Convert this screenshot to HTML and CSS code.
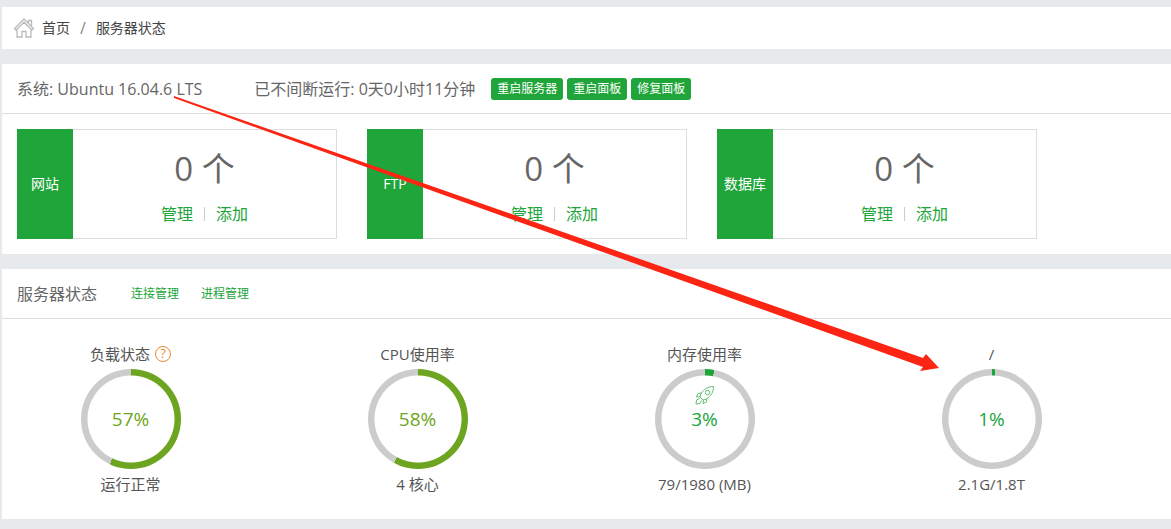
FILE: index.html
```html
<!DOCTYPE html>
<html lang="zh-CN">
<head>
  <meta charset="UTF-8">
  <meta name="viewport" content="width=device-width, initial-scale=1.0">
  <title>服务器状态</title>
  <link rel="stylesheet" href="styles.css">
</head>
<body>
  <!-- 面包屑 -->
  <nav class="crumb">
    <svg class="home" viewBox="0 0 22 22" width="22" height="22">
      <path d="M1.500 11.500 L11 2 L20.500 11.500 L19 13 L11 5.200 L3 13 Z M4 12.500 V20 H9 V14.500 H13 V20 H18 V12.500 M15.500 6 V3.500 H18.500 V9"/>
    </svg>
    <a href="#">首页</a>
    <span class="sep">/</span>
    <span>服务器状态</span>
  </nav>

  <!-- 系统信息 -->
  <section class="panel">
    <header class="panel-head">
      <span class="system">系统: Ubuntu 16.04.6 LTS</span>
      <span class="uptime">已不间断运行: 0天0小时11分钟</span>
      <div class="buttons">
        <button class="btn" type="button">重启服务器</button>
        <button class="btn" type="button">重启面板</button>
        <button class="btn" type="button">修复面板</button>
      </div>
    </header>
    <div class="cards">
      <div class="card">
        <div class="card-name">网站</div>
        <div class="card-body">
          <div class="count">0 个</div>
          <div class="links"><a href="#">管理</a><span class="bar"></span><a href="#">添加</a></div>
        </div>
      </div>
      <div class="card">
        <div class="card-name">FTP</div>
        <div class="card-body">
          <div class="count">0 个</div>
          <div class="links"><a href="#">管理</a><span class="bar"></span><a href="#">添加</a></div>
        </div>
      </div>
      <div class="card">
        <div class="card-name">数据库</div>
        <div class="card-body">
          <div class="count">0 个</div>
          <div class="links"><a href="#">管理</a><span class="bar"></span><a href="#">添加</a></div>
        </div>
      </div>
    </div>
  </section>

  <!-- 服务器状态 -->
  <section class="panel">
    <header class="panel-head">
      <h3 class="title">服务器状态</h3>
      <a class="small-link" href="#">连接管理</a>
      <a class="small-link" href="#">进程管理</a>
    </header>
    <div class="gauges">
      <div class="gauge">
        <div class="gauge-name">负载状态 <a class="help" href="#">?</a></div>
        <div class="ring load" style="--value: 57%">57%</div>
        <div class="gauge-info">运行正常</div>
      </div>
      <div class="gauge">
        <div class="gauge-name">CPU使用率</div>
        <div class="ring load" style="--value: 58%">58%</div>
        <div class="gauge-info">4 核心</div>
      </div>
      <div class="gauge">
        <div class="gauge-name">内存使用率</div>
        <div class="ring" style="--value: 3%">
          <svg class="rocket" viewBox="0 0 20 20" width="20" height="20">
            <path d="M18.500 1.500 C13 1.500 9 4 6 8.500 L5 12 L8 15 L11.500 14 C16 11 18.500 7 18.500 1.500 Z M6.500 8 L3 8.500 L1.500 12 L5 11.500 M12 13.500 L11.500 17 L8 18.500 L8.500 15 M4.500 13.500 L1.500 15 L1 19 L5 18.500 L6.500 15.500"/>
            <circle cx="12.500" cy="7.500" r="2.200"/>
          </svg>
          3%
        </div>
        <div class="gauge-info">79/1980 (MB)</div>
      </div>
      <div class="gauge">
        <div class="gauge-name">/</div>
        <div class="ring" style="--value: 1%">1%</div>
        <div class="gauge-info">2.1G/1.8T</div>
      </div>
    </div>
  </section>

  <!-- 红色箭头标注 -->
  <svg class="arrow" viewBox="0 0 766 276" width="766" height="276">
    <path d="M0 0 L749 262 L752 258 L765 272 L746 275 L749 271 L0 2 Z"/>
  </svg>
</body>
</html>
```

FILE: styles.css
```css
* {
  box-sizing: border-box;
}
body {
  margin: 0;
  padding: 7px 0 10px 2px;
  position: relative;
  background-color: #e6eaed;
  color: #666;
  font-family: "Open Sans", "Noto Sans CJK SC", sans-serif;
  font-size: 15px;
}
a {
  color: #20a53a;
  text-decoration: none;
}
a:hover {
  text-decoration: underline;
}
.crumb {
  display: flex;
  align-items: center;
  height: 42px;
  margin-bottom: 15px;
  padding-left: 11px;
  background-color: #fff;
  color: #444;
  font-size: 14px;
  line-height: 20px;
}
.crumb a {
  color: #444;
}
.home {
  margin-right: 7px;
  fill: none;
  stroke: #bbb;
  stroke-width: 1.3;
}
.sep {
  margin: 0 10px;
  color: #888;
  font-size: 16px;
}
.panel {
  margin-bottom: 15px;
  background-color: #fff;
}
.panel:last-of-type {
  margin-bottom: 0;
}
.panel-head {
  display: flex;
  align-items: center;
  height: 50px;
  padding-left: 15px;
  border-bottom: 1px solid #ddd;
  font-size: 16px;
  line-height: 22px;
}
.system {
  margin-right: 52px;
}
.uptime {
  margin-right: 16px;
}
.buttons {
  display: flex;
  gap: 4px;
}
.btn {
  height: 22px;
  padding: 0 6px;
  border: none;
  border-radius: 3px;
  background-color: #20a53a;
  color: #fff;
  font-family: inherit;
  font-size: 12px;
  line-height: 22px;
  cursor: pointer;
}
.btn:hover {
  background-color: #10952a;
}
.cards {
  display: grid;
  grid-template-columns: repeat(3, minmax(0, 320px));
  gap: 30px;
  padding: 15px;
}
.card {
  display: flex;
  height: 110px;
}
.card-name {
  display: flex;
  align-items: center;
  justify-content: center;
  width: 56px;
  background-color: #20a53a;
  color: #fff;
  font-size: 14px;
  line-height: 20px;
}
.card-body {
  flex: 1;
  padding-top: 14px;
  border: 1px solid #ddd;
  border-left: none;
  text-align: center;
}
.count {
  font-size: 33px;
  line-height: 50px;
}
.links {
  display: flex;
  align-items: center;
  justify-content: center;
  margin-top: 8px;
  font-size: 16px;
  line-height: 24px;
}
.bar {
  width: 1px;
  height: 14px;
  margin: 0 11px;
  background-color: #ccc;
}
.title {
  margin: 0 34px 0 0;
  font-size: 16px;
  font-weight: normal;
}
.small-link {
  margin-right: 22px;
  font-size: 12px;
}
.gauges {
  display: grid;
  grid-template-columns: repeat(4, 1fr);
  gap: 60px;
  padding: 25px 66px 18px 15px;
}
.gauge {
  display: flex;
  flex-direction: column;
  align-items: center;
  color: #555;
}
.gauge-name {
  display: flex;
  align-items: center;
  gap: 5px;
  height: 20px;
  margin-bottom: 5px;
  line-height: 20px;
}
.help {
  width: 16px;
  height: 16px;
  border: 1px solid #f0862b;
  border-radius: 50%;
  color: #f0862b;
  font-size: 12px;
  line-height: 14px;
  text-align: center;
}
.ring {
  display: flex;
  align-items: center;
  justify-content: center;
  position: relative;
  width: 100px;
  height: 100px;
  border-radius: 50%;
  background: radial-gradient(circle closest-side, #fff 43px, transparent 44px),
    conic-gradient(var(--color) var(--value), #ccc 0);
  --color: #20a53a;
  color: var(--color);
  font-size: 19px;
  line-height: 26px;
}
.load {
  --color: #6ea520;
}
.rocket {
  position: absolute;
  top: 16px;
  left: 40px;
  fill: none;
  stroke: #20a53a;
  stroke-width: 1;
  opacity: 0.7;
}
.gauge-info {
  height: 32px;
  line-height: 30px;
}
/* 标注盖在面板上方 */
.arrow {
  position: absolute;
  top: 96px;
  left: 174px;
  fill: #fc2412;
  pointer-events: none;
}
```
